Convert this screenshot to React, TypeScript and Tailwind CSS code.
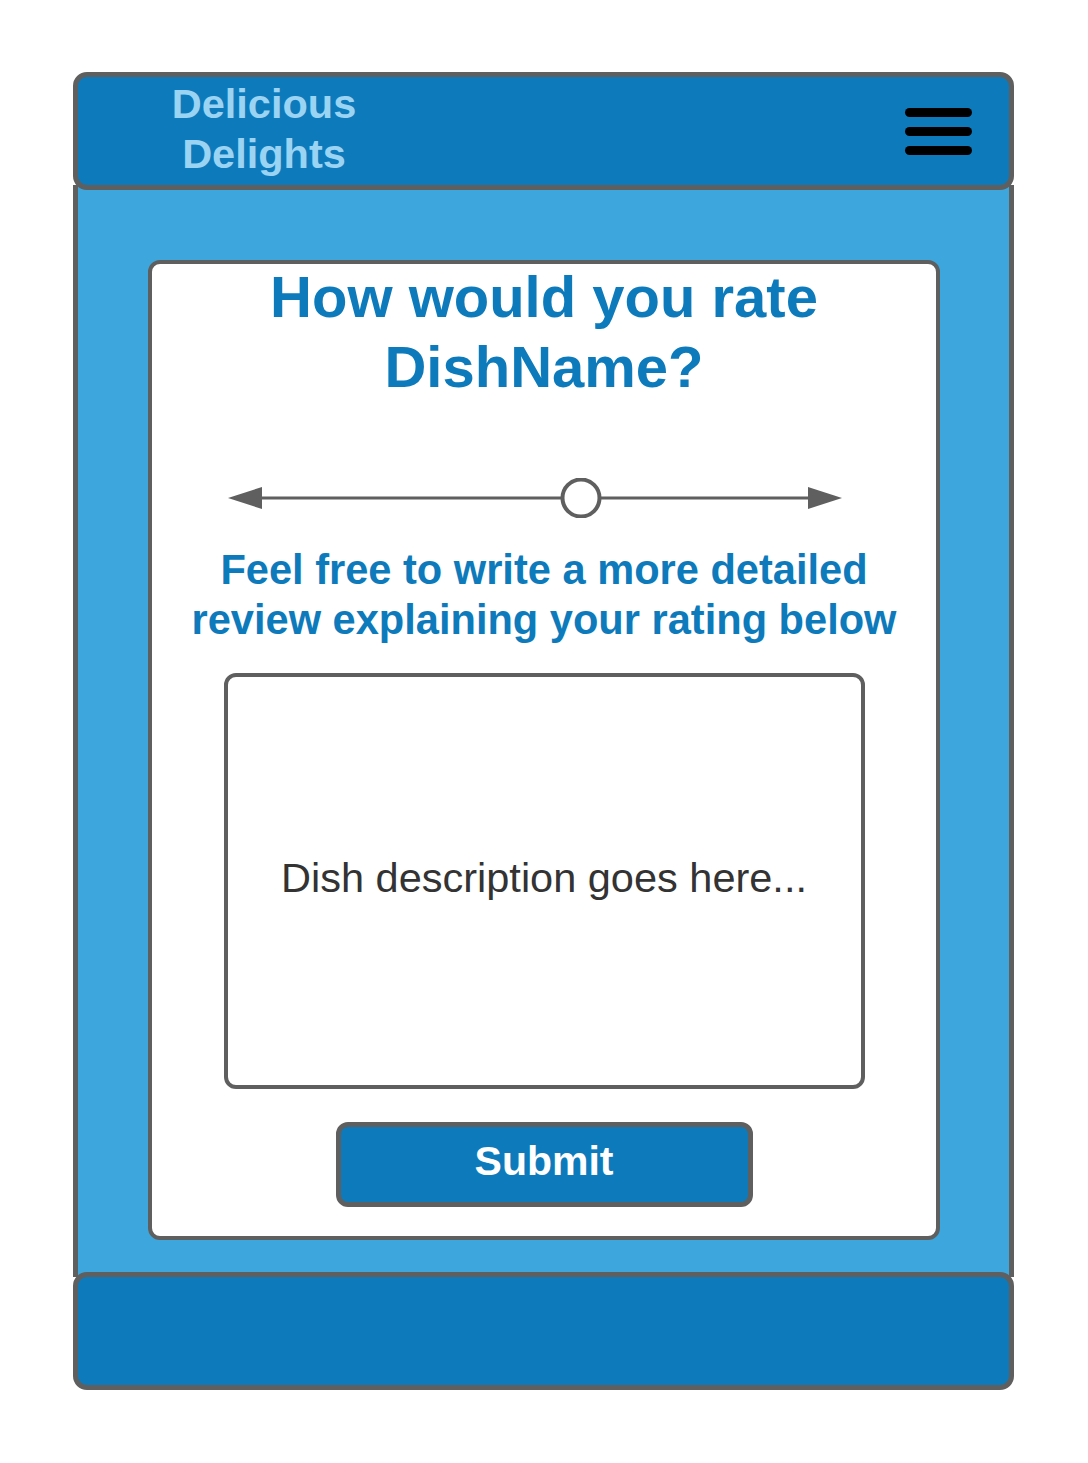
import React from "react";

const font = { fontFamily: '"Liberation Sans", Arial, sans-serif' };

function Slider() {
  // arrow line with a round handle, drawn across the card's inner width
  return (
    <svg width="784" height="40" viewBox="0 0 784 40" className="mt-[76px] block">
      <line x1="100" y1="20" x2="660" y2="20" stroke="#5f5f5f" strokeWidth="3" />
      <polygon points="76,20 110,9 110,31" fill="#5f5f5f" />
      <polygon points="690,20 656,9 656,31" fill="#5f5f5f" />
      <circle cx="429" cy="20" r="18.5" fill="#fff" stroke="#5f5f5f" strokeWidth="4" />
    </svg>
  );
}

export default function App() {
  return (
    <div className="w-[1088px] h-[1463px] bg-white pt-[72px] pl-[73px]" style={font}>
      <div className="w-[941px] h-[1318px] flex flex-col">
        <header className="h-[118px] flex items-center bg-[#0d7bbb] border-[5px] border-[#5f5f5f] rounded-[14px] relative z-10">
          <div className="w-[372px] text-center text-[41.5px] leading-[50px] font-bold text-[#9bd3f3] -mt-[4px]">
            Delicious
            <br />
            Delights
          </div>
          <div className="ml-auto mr-[37px] flex flex-col gap-[10px]">
            <span className="block w-[67px] h-[9px] rounded-full bg-black" />
            <span className="block w-[67px] h-[9px] rounded-full bg-black" />
            <span className="block w-[67px] h-[9px] rounded-full bg-black" />
          </div>
        </header>

        <main className="flex-1 -my-[5px] pt-[75px] bg-[#3ca6dd] border-x-[5px] border-[#5f5f5f] pl-[70px]">
          <section className="w-[792px] h-[980px] bg-white border-4 border-[#5f5f5f] rounded-[12px] flex flex-col items-center">
            <h1 className="text-[58px] leading-[70px] font-bold text-[#0d7bbb] text-center -mt-[2px]">
              How would you rate
              <br />
              DishName?
            </h1>
            <Slider />
            <p className="mt-[27px] text-[41.6px] leading-[50px] font-bold text-[#0d7bbb] text-center whitespace-nowrap">
              Feel free to write a more detailed
              <br />
              review explaining your rating below
            </p>
            <div className="mt-[28px] w-[641px] h-[416px] border-4 border-[#5f5f5f] rounded-[12px] flex items-center justify-center">
              <span className="text-[41.5px] text-[#333333] -mt-[6px]">Dish description goes here...</span>
            </div>
            <button className="mt-[33px] w-[417px] h-[85px] bg-[#0d7bbb] border-[5px] border-[#5f5f5f] rounded-[12px] text-white text-[41px] font-bold flex items-center justify-center pb-[6px]">
              Submit
            </button>
          </section>
        </main>

        <footer className="h-[118px] bg-[#0d7bbb] border-[5px] border-[#5f5f5f] rounded-[14px] relative z-10" />
      </div>
    </div>
  );
}
